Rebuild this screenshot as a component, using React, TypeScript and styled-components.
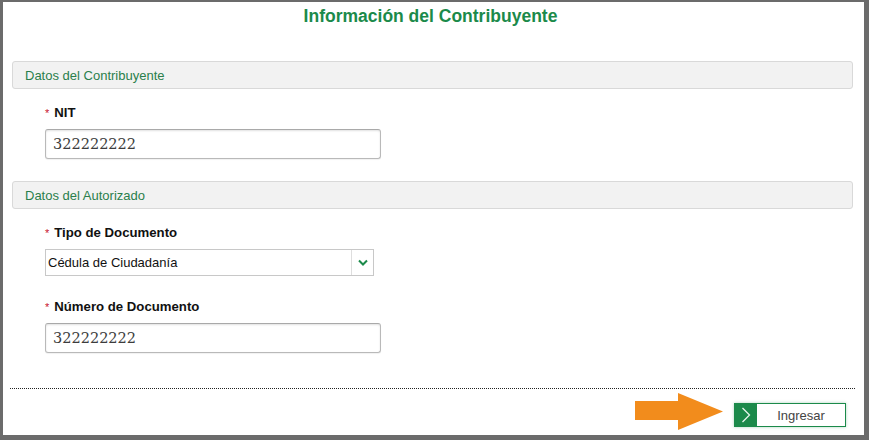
import React from "react";
import styled, { createGlobalStyle } from "styled-components";

const Global = createGlobalStyle`
  html, body { margin: 0; padding: 0; background: #fff; }
  * { box-sizing: border-box; }
`;

const Frame = styled.div`
  width: 869px;
  height: 440px;
  overflow: hidden;
  border-style: solid;
  border-color: #6b6b6b;
  border-width: 2px 5px 5px 3px;
  background: #fff;
  font-family: Arial, "Liberation Sans", sans-serif;
  display: flex;
  flex-direction: column;
  & > * { flex-shrink: 0; }
`;

const Title = styled.h1`
  margin: 0;
  padding: 4px 6px 0 0;
  height: 59px;
  line-height: 20px;
  font-size: 17.5px;
  font-weight: bold;
  text-align: center;
  color: #1b8a4a;
`;

const Content = styled.div`
  padding: 0 11px 0 9px;
  display: flex;
  flex-direction: column;
`;

const SectionHeader = styled.div<{ $top?: number }>`
  height: 28px;
  margin-top: ${(p) => p.$top ?? 0}px;
  background: #f2f2f2;
  border: 1px solid #d9d9d9;
  border-radius: 3px;
  padding-left: 12px;
  display: flex;
  align-items: center;
  font-size: 13px;
  color: #2a7f4c;
`;

const Field = styled.div<{ $top: number }>`
  margin-top: ${(p) => p.$top}px;
  margin-left: 33px;
  display: flex;
  flex-direction: column;
  gap: 8px;
`;

const Label = styled.label`
  font-size: 13.2px;
  line-height: 16px;
  font-weight: bold;
  color: #111;
  display: flex;
  align-items: baseline;
`;

const Req = styled.span`
  color: #c8102e;
  font-weight: normal;
  font-size: 11px;
  margin-right: 5px;
`;

const TextInput = styled.div<{ $w: number }>`
  width: ${(p) => p.$w}px;
  height: 30px;
  border: 1px solid #b9b9b9;
  border-top-color: #a9a9a9;
  border-radius: 3px;
  box-shadow: inset 0 1px 2px rgba(0, 0, 0, 0.12), 0 1px 1px rgba(0, 0, 0, 0.06);
  padding-left: 7px;
  display: flex;
  align-items: center;
  font-family: "DejaVu Serif", "Liberation Serif", serif;
  font-size: 14.5px;
  color: #3c3c3c;
`;

const Select = styled.div`
  width: 329px;
  height: 27px;
  border: 1px solid #c8c8c8;
  display: flex;
  align-items: stretch;
  font-size: 13px;
  color: #111;
`;

const SelectValue = styled.div`
  flex: 1;
  display: flex;
  align-items: center;
  padding-left: 2px;
`;

const SelectToggle = styled.div`
  width: 22px;
  border-left: 1px solid #dedede;
  display: flex;
  align-items: center;
  justify-content: center;
`;

const Divider = styled.div`
  margin: 35px -2px 0 -2px;
  border-top: 1px dotted #222;
`;

const Footer = styled.div`
  margin-top: 4px;
  padding-right: 18px;
  display: flex;
  justify-content: flex-end;
  align-items: flex-start;
  gap: 11px;
`;

const Arrow = styled.svg`
  flex-shrink: 0;
`;

const Button = styled.button`
  margin-top: 10px;
  width: 112px;
  height: 24px;
  padding: 0;
  border: 1px solid #1b8a4a;
  background: #fff;
  display: flex;
  align-items: stretch;
  box-shadow: 0 0 3px rgba(27, 138, 74, 0.35);
  cursor: pointer;
  font-family: Arial, "Liberation Sans", sans-serif;
`;

const ButtonIcon = styled.span`
  width: 22px;
  background: #1b8a4a;
  display: flex;
  align-items: center;
  justify-content: center;
`;

const ButtonText = styled.span`
  flex: 1;
  display: flex;
  align-items: center;
  justify-content: center;
  font-size: 13px;
  color: #444;
`;

export default function App() {
  return (
    <>
      <Global />
      <Frame>
        <Title>Información del Contribuyente</Title>
        <Content>
          <SectionHeader>Datos del Contribuyente</SectionHeader>
          <Field $top={16}>
            <Label>
              <Req>*</Req>NIT
            </Label>
            <TextInput $w={336}>322222222</TextInput>
          </Field>
          <SectionHeader $top={22}>Datos del Autorizado</SectionHeader>
          <Field $top={16}>
            <Label>
              <Req>*</Req>Tipo de Documento
            </Label>
            <Select>
              <SelectValue>Cédula de Ciudadanía</SelectValue>
              <SelectToggle>
                <svg width="10" height="7" viewBox="0 0 10 7">
                  <path d="M1 1.5 L5 5.5 L9 1.5" fill="none" stroke="#1b8a4a" strokeWidth="2" />
                </svg>
              </SelectToggle>
            </Select>
          </Field>
          <Field $top={23}>
            <Label>
              <Req>*</Req>Número de Documento
            </Label>
            <TextInput $w={336}>322222222</TextInput>
          </Field>
          <Divider />
        </Content>
        <Footer>
          <Arrow width="88" height="37" viewBox="0 0 88 37">
            <polygon points="0,8 43,8 43,0 88,18.5 43,37 43,27 0,27" fill="#f28c1c" />
          </Arrow>
          <Button>
            <ButtonIcon>
              <svg width="10" height="16" viewBox="0 0 10 16">
                <path d="M1.5 1 L8.5 8 L1.5 15" fill="none" stroke="#e8f5ec" strokeWidth="1.3" />
              </svg>
            </ButtonIcon>
            <ButtonText>Ingresar</ButtonText>
          </Button>
        </Footer>
      </Frame>
    </>
  );
}
